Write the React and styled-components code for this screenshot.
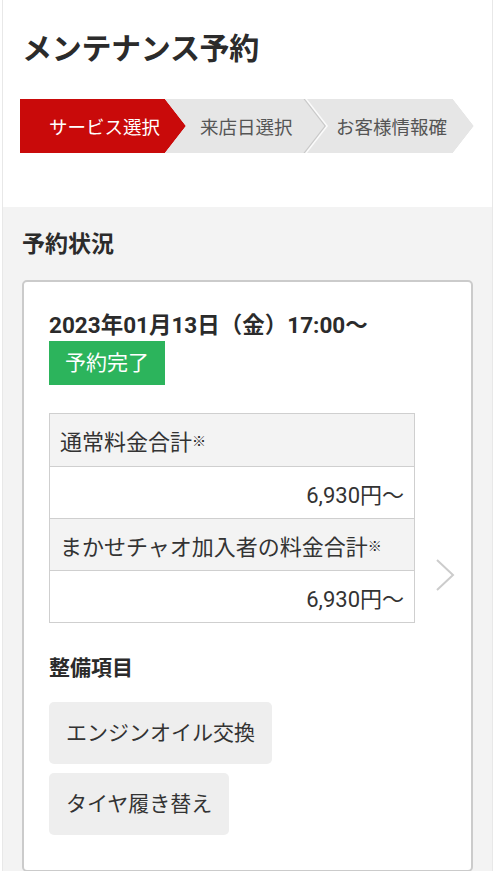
import styled, { createGlobalStyle } from "styled-components";

const GlobalStyle = createGlobalStyle`
    html, body {
        margin: 0;
        padding: 0;
        background: #ffffff;
    }
    body {
        font-family: Roboto, "Noto Sans CJK JP", "Noto Sans", sans-serif;
        color: #333333;
    }
    * {
        box-sizing: border-box;
    }
`

const Page = styled.div`
    margin: 0 2px;
    border-left: 1px solid #e8e8e8;
    border-right: 1px solid #e8e8e8;
    min-height: 871px;
    background: #f3f3f3;
`

const Header = styled.header`
    background: #ffffff;
    padding: 27px 19px 54px;
`

const Title = styled.h1`
    margin: 0 0 28px;
    font-size: 30px;
    line-height: 44px;
    font-weight: 700;
    color: #2b2b2b;
    letter-spacing: -0.3px;
`

const Steps = styled.ol`
    display: flex;
    margin: 0;
    padding: 0;
    list-style: none;
    height: 54px;
    width: 454px;
    margin-left: -2px;
`

const arrow = `polygon(0 0, calc(100% - 21px) 0, 100% 50%, calc(100% - 21px) 100%, 0 100%)`

const Step = styled.li`
    position: relative;
    flex: 0 0 ${(p) => p.$width}px;
    margin-left: ${(p) => (p.$first ? 0 : -21)}px;
    z-index: ${(p) => p.$z};
    clip-path: ${arrow};
    background: ${(p) => (p.$edge ? "#fbfbfb" : "transparent")};
`

const StepShade = styled.div`
    height: 100%;
    width: ${(p) => (p.$edge ? "calc(100% - 2px)" : "100%")};
    clip-path: ${arrow};
    background: ${(p) => (p.$edge ? "#c9c9c9" : "transparent")};
`

const StepFace = styled.div`
    display: flex;
    align-items: center;
    height: 100%;
    width: ${(p) => (p.$edge ? "calc(100% - 1.5px)" : "100%")};
    clip-path: ${arrow};
    padding-left: ${(p) => p.$indent}px;
    background: ${(p) => (p.$active ? "#c90a0a" : "#e6e6e6")};
    color: ${(p) => (p.$active ? "#ffffff" : "#555555")};
    font-size: 18.5px;
    white-space: nowrap;
    overflow: hidden;
`

const Section = styled.section`
    padding: 22px 19px 0;
`

const SectionTitle = styled.h2`
    margin: 0 0 19px;
    font-size: 23px;
    line-height: 32px;
    font-weight: 700;
    color: #2b2b2b;
`

const Card = styled.div`
    display: flex;
    align-items: center;
    gap: 20px;
    background: #ffffff;
    border: 2px solid #cbcbcb;
    border-radius: 5px;
    padding: 27px 19px 35px 25px;
`

const CardBody = styled.div`
    width: 366px;
    flex: 0 0 366px;
`

const DateText = styled.div`
    font-size: 22.5px;
    line-height: 32px;
    font-weight: 700;
    color: #2b2b2b;
    white-space: nowrap;
`

const Badge = styled.span`
    display: inline-block;
    padding: 6px 16px;
    background: #2cb45c;
    color: #ffffff;
    font-size: 21px;
    line-height: 32px;
`

const PriceTable = styled.div`
    margin-top: 28px;
    border: 1.5px solid #cfcfcf;
`

const PriceRow = styled.div`
    height: 52px;
    display: flex;
    align-items: center;
    justify-content: ${(p) => (p.$value ? "flex-end" : "flex-start")};
    padding: 0 10px;
    background: ${(p) => (p.$value ? "#ffffff" : "#f3f3f3")};
    border-top: ${(p) => (p.$first ? "none" : "1.5px solid #cfcfcf")};
    font-size: 22px;
    color: #333333;
    white-space: nowrap;
`

const Note = styled.span`
    font-size: 14px;
    font-weight: 700;
    color: #222222;
    vertical-align: 3px;
`

const ItemsTitle = styled.h3`
    margin: 30px 0 19px;
    font-size: 21px;
    line-height: 30px;
    font-weight: 700;
    color: #2b2b2b;
`

const Tags = styled.div`
    display: flex;
    flex-direction: column;
    align-items: flex-start;
    gap: 9px;
`

const Tag = styled.span`
    display: inline-block;
    padding: 15px 17px;
    background: #eeeeee;
    border-radius: 5px;
    font-size: 21px;
    line-height: 32px;
    color: #333333;
`

const Chevron = styled.svg`
    flex: 0 0 auto;
    width: 20px;
    height: 34px;
    margin-top: 6px;
`

const steps = [
    { label: "サービス選択", width: 166, indent: 29, active: true },
    { label: "来店日選択", width: 163, indent: 35, edge: true },
    { label: "お客様情報確", width: 167, indent: 29 },
]

export default function App() {
    return (
        <>
            <GlobalStyle />
            <Page>
                <Header>
                    <Title>メンテナンス予約</Title>
                    <Steps>
                        {steps.map((s, i) => (
                            <Step key={s.label} $width={s.width} $first={i === 0} $z={steps.length - i} $edge={s.edge}>
                                <StepShade $edge={s.edge}>
                                    <StepFace $edge={s.edge} $active={s.active} $indent={s.indent}>
                                        {s.label}
                                    </StepFace>
                                </StepShade>
                            </Step>
                        ))}
                    </Steps>
                </Header>
                <Section>
                    <SectionTitle>予約状況</SectionTitle>
                    <Card>
                        <CardBody>
                            <DateText>2023年01月13日（金）17:00〜</DateText>
                            <Badge>予約完了</Badge>
                            <PriceTable>
                                <PriceRow $first>通常料金合計<Note>※</Note></PriceRow>
                                <PriceRow $value>6,930円〜</PriceRow>
                                <PriceRow>まかせチャオ加入者の料金合計<Note>※</Note></PriceRow>
                                <PriceRow $value>6,930円〜</PriceRow>
                            </PriceTable>
                            <ItemsTitle>整備項目</ItemsTitle>
                            <Tags>
                                <Tag>エンジンオイル交換</Tag>
                                <Tag>タイヤ履き替え</Tag>
                            </Tags>
                        </CardBody>
                        <Chevron viewBox="0 0 20 34">
                            <polyline points="2,2 18,17 2,32" fill="none" stroke="#cccccc" strokeWidth="2" />
                        </Chevron>
                    </Card>
                </Section>
            </Page>
        </>
    )
}
